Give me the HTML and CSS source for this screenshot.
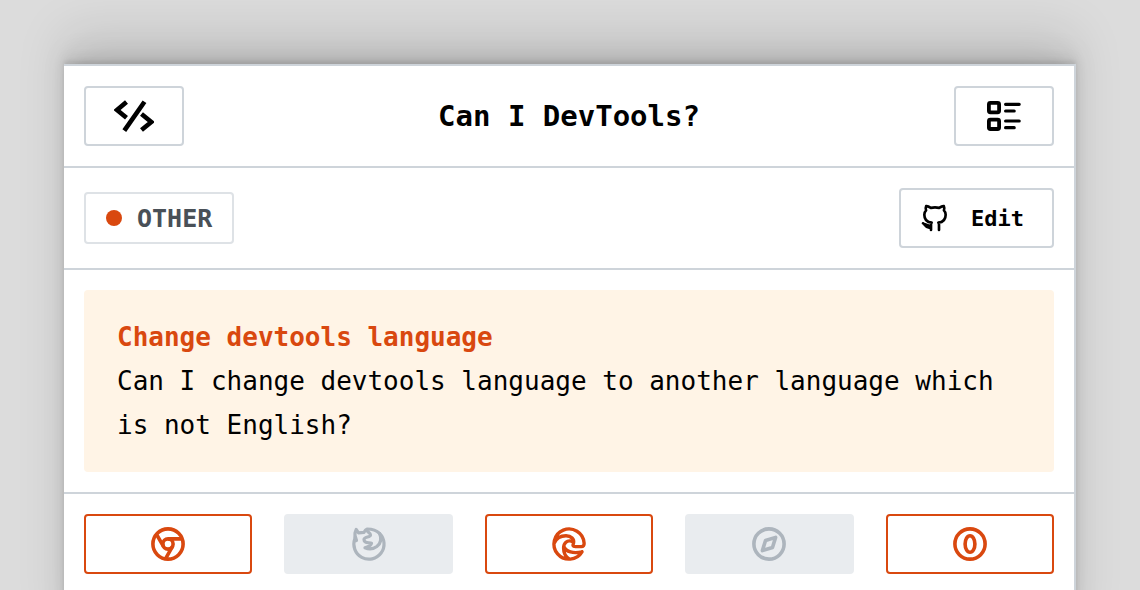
FILE: index.html
```html
<!DOCTYPE html>
<html lang="en">
<head>
<meta charset="utf-8">
<meta name="viewport" content="width=device-width, initial-scale=1">
<title>Can I DevTools?</title>
<link rel="stylesheet" href="styles.css">
</head>
<body>
<main class="panel">
  <header class="row">
    <a class="button button-icon" href="#home" aria-label="Home">
      <svg class="icon" viewBox="0 0 40 40" stroke-width="4.6"><path d="M12.5 6 3 14l9.500 7.800M30.500 5.800 10.300 34.600M27.500 18l9.800 8-9.800 8"/></svg>
    </a>
    <h1 class="title">Can I DevTools?</h1>
    <button class="button button-icon" type="button" aria-label="Browse tips">
      <svg class="icon round" viewBox="0 0 40 40" stroke-width="3.8"><rect x="4.900" y="6.900" width="10.200" height="9.400" rx="1.500"/><rect x="4.900" y="23.600" width="10.200" height="9.400" rx="1.500"/><path stroke-width="3.2" d="M21.600 8.300h13.600M21.600 15h8.600M21.600 25h13.600M21.600 31.700h8.600"/></svg>
    </button>
  </header>
  <div class="row">
    <span class="badge"><span class="dot"></span>OTHER</span>
    <a class="button button-edit" href="#edit">
      <svg class="icon-small round" viewBox="0 0 24 24" stroke-width="2"><path d="M9 19c-4.3 1.4-4.3-2.5-6-3m12 5v-3.5c0-1 .1-1.4-.5-2 2.8-.3 5.5-1.4 5.5-6a4.6 4.6 0 0 0-1.3-3.2 4.2 4.2 0 0 0-.1-3.2s-1.1-.3-3.5 1.3a12.3 12.3 0 0 0-6.2 0C6.5 2.8 5.4 3.1 5.4 3.1a4.2 4.2 0 0 0-.1 3.2A4.6 4.6 0 0 0 4 9.5c0 4.6 2.7 5.7 5.5 6-.6.6-.6 1.2-.5 2V21"/><path d="M4.500 16.800c1.200.2 2 1.200 4 1.200"/></svg>
      Edit
    </a>
  </div>
  <section class="section">
    <div class="tip">
      <h2 class="tip-title">Change devtools language</h2>
      <p class="tip-text">Can I change devtools language to another language which is not English?</p>
    </div>
  </section>
  <nav class="browsers" aria-label="Browsers">
    <button class="browser" type="button" aria-label="Chrome">
      <svg class="icon" viewBox="0 0 40 40" stroke-width="3.6"><circle cx="20" cy="20" r="15.100"/><circle cx="20" cy="20" r="5.100"/><path d="M20 14.900h14M24.400 22.600l-6.800 12M15.600 22.600 8.600 10.500"/></svg>
    </button>
    <button class="browser" type="button" aria-label="Firefox" disabled>
      <svg class="icon round" viewBox="0 0 40 40" stroke-width="3.2"><path d="M7.500 16.500 6 11.500V9L7.200 5.400 9.500 8.800 15 8.300C15.800 6.500 16.800 5.400 18.200 5c4.800 0 9 1 12.300 4.300A15.100 15.100 0 1 1 5.800 14.800L6 11.500"/><path d="M17.500 6c1 2.500 4 2.500 4 5s-6.500 1.500-6.500 4.500c0 4.500 6 2.500 7.500 3.800-.5 3-4 3.500-6.500 4.500 4 1.800 8.500 1.200 11.800-1.300 5-4 4.700-8.800 2.700-13.200"/></svg>
    </button>
    <button class="browser" type="button" aria-label="Edge">
      <svg class="icon round" viewBox="0 0 40 40" stroke-width="3.4"><path d="M33 27.800A15.100 15.100 0 1 1 35.100 19c.2 2.300-.8 3.600-2.800 3.600h-5.800c-3.500 0-2.500-1.800-2-3.400 1-4.200-2.200-7.400-7.500-7.400-5.500 0-9.500 2.200-11.700 7.400M22.200 17.200c-4-1.200-7.600 1.800-7.600 6.800 0 5 2 8.800 5.600 10.900M14.800 22.500c2.200 5.300 9.500 7.500 18.200 5.300"/></svg>
    </button>
    <button class="browser" type="button" aria-label="Safari" disabled>
      <svg class="icon round" viewBox="0 0 40 40" stroke-width="3.6"><circle cx="20" cy="20" r="15.100"/><path d="M26.600 13.400 23.500 23.500l-10.100 3.100 3.100-10.100z"/></svg>
    </button>
    <button class="browser" type="button" aria-label="Opera">
      <svg class="icon" viewBox="0 0 40 40" stroke-width="3.6"><circle cx="20" cy="20" r="15.100"/><ellipse cx="20" cy="20" rx="4.900" ry="8.300"/></svg>
    </button>
  </nav>
</main>
</body>
</html>
```
FILE: styles.css
```css
* {
  box-sizing: border-box;
}

body {
  margin: 0;
  padding: 64px 64px 0;
  background: #dcdcdc;
  color: #000;
  font-family: "DejaVu Sans Mono", "Liberation Mono", monospace;
}

.panel {
  min-height: 100vh;
  border: 2px solid #ced4da;
  border-left: 0;
  background: #fff;
  box-shadow:
    0 -3px 3px rgba(0, 0, 0, 0.04),
    0 -3px 6px rgba(0, 0, 0, 0.05),
    0 -6px 12px rgba(0, 0, 0, 0.06),
    0 -12px 24px rgba(0, 0, 0, 0.07),
    0 -32px 48px rgba(0, 0, 0, 0.11);
}

.row {
  display: flex;
  align-items: center;
  justify-content: space-between;
  padding: 20px;
  border-bottom: 2px solid #ced4da;
}

.button {
  display: flex;
  align-items: center;
  justify-content: center;
  height: 60px;
  padding: 0;
  border: 2px solid #ced4da;
  border-radius: 4px;
  background: #fff;
  color: inherit;
  font: inherit;
  text-decoration: none;
}

.button-icon {
  width: 100px;
}

.button-edit {
  gap: 20px;
  padding: 0 28px 0 18px;
  font-size: 22px;
  font-weight: 700;
}

.icon,
.icon-small {
  display: block;
  width: 40px;
  height: 40px;
  fill: none;
  stroke: currentColor;
}

.icon-small {
  width: 32px;
  height: 32px;
}

.round {
  stroke-linecap: round;
  stroke-linejoin: round;
}

.title {
  margin: 0;
  font-size: 29px;
  line-height: 44px;
}

.badge {
  display: flex;
  align-items: center;
  gap: 15px;
  height: 52px;
  padding: 0 20px;
  border: 2px solid #dee2e6;
  border-radius: 4px;
  color: #495057;
  font-size: 25px;
  font-weight: 700;
}

.dot {
  width: 16px;
  height: 16px;
  border-radius: 50%;
  background: #d9480f;
}

.section {
  padding: 20px;
  border-bottom: 2px solid #ced4da;
}

.tip {
  padding: 25px 33px;
  border-radius: 4px;
  background: #fff4e6;
  font-size: 26px;
  line-height: 44px;
}

.tip-title {
  margin: 0;
  color: #d9480f;
  font-size: 26px;
}

.tip-text {
  margin: 0;
}

.browsers {
  display: grid;
  grid-template-columns: repeat(5, 1fr);
  gap: 32px;
  padding: 20px;
}

.browser {
  display: flex;
  align-items: center;
  justify-content: center;
  height: 60px;
  padding: 0;
  border: 2px solid #d9480f;
  border-radius: 4px;
  background: #fff;
  color: #d9480f;
}

.browser:disabled {
  border-color: #e9ecef;
  background: #e9ecef;
  color: #adb5bd;
}
```
